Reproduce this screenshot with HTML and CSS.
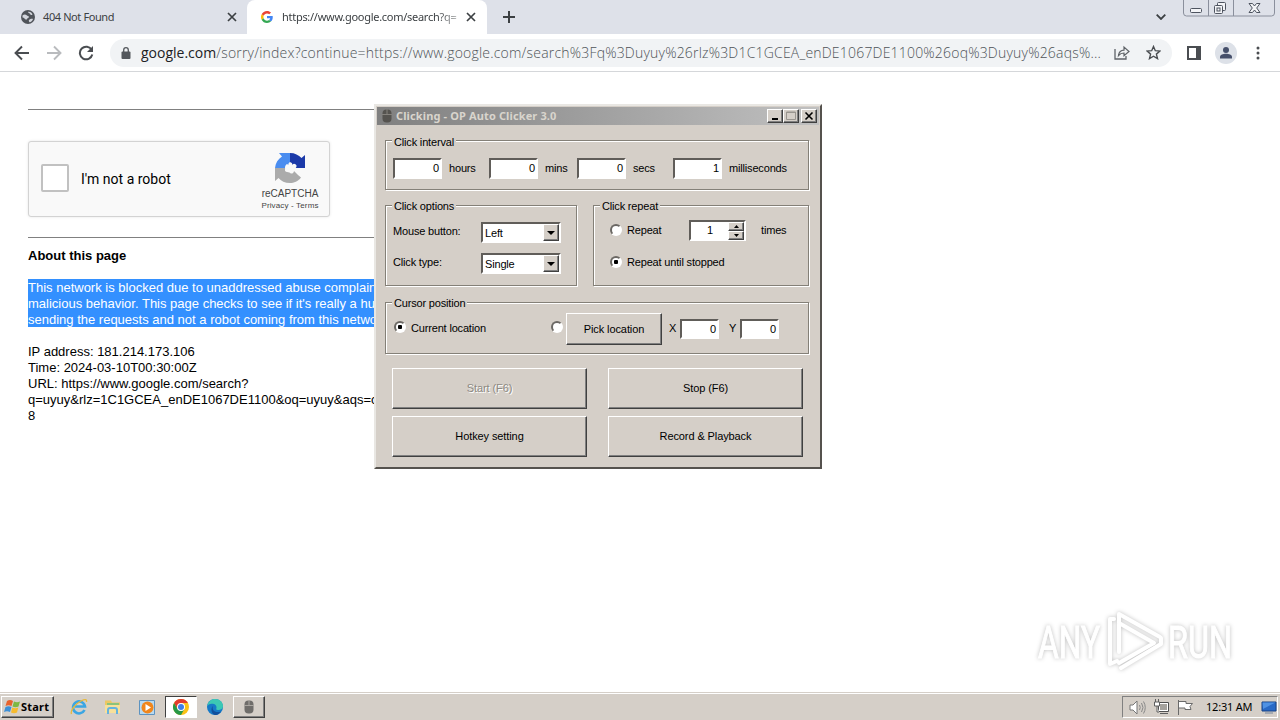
FILE: index.html
```html
<!DOCTYPE html>
<html lang="en">
  <head>
    <meta charset="utf-8">
    <title>Desktop</title>
    <link rel="stylesheet" href="styles.css">
  </head>

  <body>
    <div class="desktop">
      <header class="tabstrip">
        <div class="tab tab-idle">
          <svg width="14" height="14" viewBox="0 0 14 14"><circle cx="7" cy="7" r="7" fill="#50545a"/><path d="M1.500 5.500C3 4 5 4.500 6 5.500s2 .500 2 1.500-2 1-2 2-2 .500-2.500-.500-1.500-1-2-1zM7 1.800c2-.500 4 1 4.500 2.700-1 1-2 .500-2.500-.500S7 3 7 1.800zM8 10c1-1 3-1.500 4-1-.500 2-2 3-3.500 3.300C8 11.500 7.500 10.500 8 10z" fill="#d3d6dd"/></svg>
          <span class="tab-title">404 Not Found</span>
          <svg class="tab-close" width="10" height="10" viewBox="0 0 10 10"><path d="M1 1l8 8M9 1l-8 8" stroke="#3c4043" stroke-width="1.700"/></svg>
        </div>
        <div class="tab tab-active">
          <svg width="12" height="12" viewBox="0 0 48 48"><path fill="#ea4335" d="M24 9.500c3.500 0 6.700 1.200 9.200 3.600l6.900-6.900C35.900 2.400 30.500 0 24 0 14.600 0 6.500 5.400 2.600 13.200l8 6.200C12.400 13.700 17.700 9.500 24 9.500z"/><path fill="#4285f4" d="M47 24.500c0-1.600-.2-3.100-.4-4.500H24v9h12.900c-.6 3-2.300 5.500-4.800 7.200l7.700 6C44.400 38 47 31.800 47 24.500z"/><path fill="#fbbc05" d="M10.500 28.600c-.5-1.500-.8-3-.8-4.600s.3-3.100.8-4.600l-8-6.200C.9 16.500 0 20.100 0 24s.9 7.500 2.600 10.800z"/><path fill="#34a853" d="M24 48c6.500 0 11.900-2.100 15.900-5.800l-7.700-6c-2.200 1.500-4.900 2.300-8.200 2.300-6.300 0-11.600-4.200-13.500-9.900l-8 6.200C6.500 42.600 14.600 48 24 48z"/></svg>
          <span class="tab-title fade">https://www.google.com/search?q=</span>
          <svg class="tab-close" width="10" height="10" viewBox="0 0 10 10"><path d="M1 1l8 8M9 1l-8 8" stroke="#3c4043" stroke-width="1.700"/></svg>
        </div>
        <svg class="new-tab" width="12" height="12" viewBox="0 0 12 12"><path d="M6 0v12M0 6h12" stroke="#3c4043" stroke-width="2"/></svg>
        <svg class="tab-search" width="10" height="6" viewBox="0 0 10 6"><path d="M.700 .700L5 5 9.300 .700" fill="none" stroke="#3c4043" stroke-width="1.800"/></svg>
        <div class="caption">
          <svg width="92" height="17" viewBox="0 0 92 17"><path d="M.500 0v13a3 3 0 0 0 3 3h85a3 3 0 0 0 3-3V0M25.500 0v16M50.500 0v16" fill="none" stroke="#8a8f9c"/><g fill="#f3f4f7" stroke="#4e5460"><rect x="7.500" y="8.500" width="11" height="4" rx="1"/><rect x="34.500" y="2.500" width="8" height="8" rx="1"/><rect x="31.500" y="5.500" width="8" height="8" rx="1"/><rect x="34" y="8" width="3" height="3"/><path d="M66 3.500h3.500L71.500 6l2-2.500H77l-3.300 4.500 3.300 4.500h-3.500l-2-2.500-2 2.500H66L69.300 8z"/></g></svg>
        </div>
      </header>

      <nav class="toolbar">
        <svg class="nav-icon" width="16" height="16" viewBox="0 0 16 16"><path d="M15 8H2M8 1.500L1.500 8 8 14.500" fill="none" stroke="#4a4d51" stroke-width="1.900"/></svg>
        <svg class="nav-icon" width="16" height="16" viewBox="0 0 16 16"><path d="M1 8h13M8 1.500L14.500 8 8 14.500" fill="none" stroke="#b9bbbe" stroke-width="1.900"/></svg>
        <svg class="nav-icon" width="16" height="16" viewBox="0 0 16 16"><path d="M13.700 5A6.300 6.300 0 1 0 14.300 9.500" fill="none" stroke="#4a4d51" stroke-width="2"/><path d="M15 1v6H9z" fill="#4a4d51"/></svg>
        <div class="omnibox">
          <svg width="10" height="12" viewBox="0 0 10 12"><rect y="4.500" x=".500" width="9" height="7.500" rx="1" fill="#54585d"/><path d="M2.700 5V3a2.300 2.300 0 0 1 4.600 0v2" fill="none" stroke="#54585d" stroke-width="1.300"/></svg>
          <span class="url"><b>google.com</b>/sorry/index?continue=https://www.google.com/search%3Fq%3Duyuy%26rlz%3D1C1GCEA_enDE1067DE1100%26oq%3Duyuy%26aqs%...</span>
          <svg class="share" width="16" height="15" viewBox="0 0 16 15"><path d="M1 4v10h11v-3" fill="none" stroke="#5f6368" stroke-width="1.300"/><path d="M4.500 10.500C5 7 7 5.300 10 5.200V2l5 4.500-5 4.200V8C7.500 8 6 8.700 4.500 10.500z" fill="none" stroke="#5f6368" stroke-width="1.200"/></svg>
          <svg width="15" height="15" viewBox="0 0 15 15"><path d="M7.500 1.500l1.800 4.200 4.600.4-3.500 3 1.100 4.500-4-2.400-4 2.400 1.100-4.500-3.500-3 4.600-.4z" fill="none" stroke="#4a4d51" stroke-width="1.400"/></svg>
        </div>
        <svg class="side-panel" width="14" height="14" viewBox="0 0 14 14"><rect x="1" y="1" width="12" height="12" fill="none" stroke="#4a4d51" stroke-width="2"/><path d="M9 1h4v12H9z" fill="#4a4d51"/></svg>
        <svg class="avatar" width="22" height="22" viewBox="0 0 22 22"><circle cx="11" cy="11" r="11" fill="#dde1e8"/><circle cx="11" cy="8" r="3" fill="#46506b"/><path d="M5 16.500V15c0-2 3-3.200 6-3.200s6 1.200 6 3.200v1.500z" fill="#46506b"/></svg>
        <svg width="4" height="14" viewBox="0 0 4 14" fill="#4a4d51"><circle cx="2" cy="2" r="1.500"/><circle cx="2" cy="7" r="1.500"/><circle cx="2" cy="12" r="1.500"/></svg>
      </nav>

      <main class="page">
        <hr>
        <div class="captcha">
          <span class="captcha-box"></span>
          <span class="captcha-label">I'm not a robot</span>
          <div class="captcha-brand">
            <svg width="32" height="32" viewBox="0 0 32 32"><path d="M16 1H5l3 3.500C4 7 1.500 11 1 16h10c0-2 .500-3 2-4 1 1 2 1 3 0z" fill="#4a8df0"/><path d="M16 1c5 0 8.500 2 11.500 5L31 3v13H20l2-2c0-2-2-3-3.500-1.500L16 14z" fill="#1c3aa9"/><path d="M1 16h10c0 3 2 4.500 5 4.500 1.500 0 3-.500 4-1.500l4 4 3 2.500c-3 4-7 5.500-11 5.500-5 0-9-2-11.500-5L1 29z" fill="#ababab"/><path d="M16 16c-3-4-1-6.500 1-5.500s1 2 1 3c3-2 5-1 4.500 1s-2 2-3 2c1 3 0 5-2 5s-2-2-2.500-3c-2 2-4 1.500-4-.500s2.500-2 5-2z" fill="#f9f9f9"/></svg>
            <span class="brand-name">reCAPTCHA</span>
            <span class="brand-links">Privacy - Terms</span>
          </div>
        </div>
        <hr>
        <div class="about">
          <b>About this page</b>
          <p class="selected">This network is blocked due to unaddressed abuse complaints<br>malicious behavior. This page checks to see if it's really a human<br>sending the requests and not a robot coming from this network</p>
          <p>IP address: 181.214.173.106<br>Time: 2024-03-10T00:30:00Z<br>URL: https://www.google.com/search?<br>q=uyuy&amp;rlz=1C1GCEA_enDE1067DE1100&amp;oq=uyuy&amp;aqs=c<br>8</p>
        </div>
      </main>

      <footer class="taskbar">
        <div class="start">
          <svg width="17" height="16" viewBox="0 0 17 16"><path d="M3 2q3-2 6 0L7.500 7q-3-1.500-6 0z" fill="#e8622c"/><path d="M10 2.500q3 1.500 6 0L14.500 7.500q-3 1.500-6 0z" fill="#7db843"/><path d="M1.500 8q3-1.500 6 0L6 13q-3-1.500-6 0z" fill="#3c8fd6"/><path d="M8.300 8.500q3 1.500 6 0L13 13.500q-3 1.500-6 0z" fill="#f6bb2e"/></svg>
          <span>Start</span>
        </div>
        <div class="launcher">
          <svg width="18" height="18" viewBox="0 0 18 18"><path d="M14.500 12A6 6 0 1 1 15 8.500H5" fill="none" stroke="#3ba6e3" stroke-width="2.600"/><path d="M1.500 16C0 13 5 6 11 3c4-2 6-2 5.500 1" fill="none" stroke="#e7b93a" stroke-width="1.300"/></svg>
        </div>
        <div class="launcher">
          <svg width="18" height="16" viewBox="0 0 18 16"><path d="M1 1.500h6l1 2h8V14H1z" fill="#ecc863"/><path d="M3 4h12v5H3z" fill="#8cc37a"/><path d="M1 6h15v8H1z" fill="#f7e09a"/><path d="M4 15v-4q0-2 2-2h5q2 0 2 2v4" fill="none" stroke="#63b3e0" stroke-width="2"/></svg>
        </div>
        <div class="launcher">
          <svg width="17" height="17" viewBox="0 0 17 17"><path d="M.500 1.500h15v14H.500z" fill="#b9daf0" stroke="#5d93c0"/><circle cx="8.500" cy="8.500" r="6" fill="#f0861c"/><path d="M6.500 5l5.500 3.500L6.500 12z" fill="#fff"/></svg>
        </div>
        <div class="launcher pressed">
          <svg width="16" height="16" viewBox="0 0 16 16"><circle cx="8" cy="8" r="8" fill="#fbc116"/><path d="M1.070 4A8 8 0 0 1 14.930 4H8L4.540 10z" fill="#e33b2e"/><path d="M1.070 4A8 8 0 0 0 8 16l3.460-6H4.540z" fill="#279847"/><circle cx="8" cy="8" r="4" fill="#fff"/><circle cx="8" cy="8" r="3" fill="#3f7ee8"/></svg>
        </div>
        <div class="launcher">
          <svg width="16" height="16" viewBox="0 0 16 16"><circle cx="8" cy="8" r="8" fill="#1679c7"/><path d="M.300 7C1 2.500 4.500 0 8 0c5 0 8 3.500 8 7 0 3-2.500 4-5 4-2 0-2-1-1.500-2C10 6 7 4.500 4.500 4.800 2.500 5 1 6 .300 7z" fill="#3cc8b4"/><path d="M6 7c-1.500 4 2 7.500 8 5.500C12 15.500 9.500 16 8 16 4 15 3.500 9 6 7z" fill="#124f9c"/></svg>
        </div>
        <div class="launcher raised">
          <svg width="10" height="14" viewBox="0 0 10 14"><rect x=".500" y=".500" width="9" height="13" rx="4" fill="#6f6d6a"/><path d="M5 0v5M0 5.500h10" stroke="#aaa6a0"/></svg>
        </div>
        <div class="tray">
          <svg width="17" height="15" viewBox="0 0 17 15"><path d="M1 5h3l4-4v13L4 10H1z" fill="#fff" stroke="#777"/><path d="M10.500 5q1.500 2.500 0 5M12.500 3q3 4.500 0 9M14.500 1.500q3.500 6 0 12" fill="none" stroke="#888"/></svg>
          <svg width="17" height="16" viewBox="0 0 17 16"><path d="M5.500 3.500h10v9h-10z" fill="#fff" stroke="#4f4f4f"/><path d="M7 5h7v6H7z" fill="#a5a29d"/><path d="M7 14.500h8M2.500 0v3M5.500 0v3M1.500 3h5v4h-5zM4 7v6h2" fill="#fff" stroke="#5f5f5f"/></svg>
          <svg width="17" height="15" viewBox="0 0 17 15"><path d="M1.500 0v15M2 1.500h7v2h6.500l-2.500 3 1 3H8V8H2" fill="#fff" stroke="#6a6a6a"/></svg>
          <span class="clock">12:31 AM</span>
          <svg width="16" height="13" viewBox="0 0 16 13"><path d="M1 1h14v9H1z" fill="#2869c6" stroke="#174285"/><path d="M1.500 1.500h13L2 8z" fill="#4f92e4"/><path d="M4 12h8" stroke="#75869c"/></svg>
        </div>
      </footer>

      <section class="dialog">
        <div class="titlebar">
          <svg width="10" height="14" viewBox="0 0 10 14"><rect x=".500" y=".500" width="9" height="13" rx="4" fill="#55534f"/><path d="M5 0v5M0 5.500h10" stroke="#85827d"/></svg>
          <span class="title">Clicking - OP Auto Clicker 3.0</span>
          <span class="win-btn"><svg width="12" height="10" viewBox="0 0 12 10"><path d="M3 7h6v2H3z"/></svg></span>
          <span class="win-btn"><svg width="12" height="10" viewBox="0 0 12 10"><path d="M1.500 1v7.500h9V1zM1 1.500h10" fill="none" stroke="#99958f"/></svg></span>
          <span class="win-btn win-close"><svg width="12" height="10" viewBox="0 0 12 10"><path d="M2.500 1.500l7 7M9.500 1.500l-7 7" stroke="#000" stroke-width="1.600"/></svg></span>
        </div>
        <div class="dialog-body">
          <div class="group interval">
            <span class="legend">Click interval</span>
            <div class="interval-row">
              <span class="input">0</span><label>hours</label>
              <span class="input">0</span><label>mins</label>
              <span class="input">0</span><label>secs</label>
              <span class="input">1</span><label>milliseconds</label>
            </div>
          </div>

          <div class="group-row">
            <div class="group options">
              <span class="legend">Click options</span>
              <div class="options-grid">
                <label>Mouse button:</label>
                <span class="select">Left<i><svg width="8" height="4" viewBox="0 0 8 4"><path d="M0 0h8L4 4z"/></svg></i></span>
                <label>Click type:</label>
                <span class="select">Single<i><svg width="8" height="4" viewBox="0 0 8 4"><path d="M0 0h8L4 4z"/></svg></i></span>
              </div>
            </div>
            <div class="group repeat">
              <span class="legend">Click repeat</span>
              <div class="repeat-row">
                <span class="radio"></span>
                <label class="repeat-label">Repeat</label>
                <span class="spinner">1<span class="arrows"><i><svg width="5" height="3" viewBox="0 0 5 3"><path d="M0 3h5L2.500 0z"/></svg></i><i><svg width="5" height="3" viewBox="0 0 5 3"><path d="M0 0h5L2.500 3z"/></svg></i></span></span>
                <label class="times">times</label>
              </div>
              <div class="repeat-row">
                <span class="radio checked"></span>
                <label>Repeat until stopped</label>
              </div>
            </div>
          </div>

          <div class="group cursor">
            <span class="legend">Cursor position</span>
            <div class="cursor-row">
              <span class="radio checked"></span>
              <label class="current">Current location</label>
              <span class="radio"></span>
              <button class="pick">Pick location</button>
              <label class="axis">X</label><span class="input small">0</span>
              <label class="axis axis-y">Y</label><span class="input small">0</span>
            </div>
          </div>

          <div class="actions">
            <button disabled>Start (F6)</button>
            <button>Stop (F6)</button>
            <button>Hotkey setting</button>
            <button>Record &amp; Playback</button>
          </div>
        </div>
      </section>

      <svg class="watermark" width="200" height="64" viewBox="0 0 200 64">
        <g fill="#fff" stroke="#fff" font-family="Roboto, sans-serif" font-size="45">
          <text x="3" y="50" textLength="62" lengthAdjust="spacingAndGlyphs">ANY</text>
          <text x="133" y="50" textLength="64" lengthAdjust="spacingAndGlyphs">RUN</text>
        </g>
        <g fill="none" stroke="#fff" stroke-width="4" stroke-linejoin="round" stroke-linecap="round">
          <path d="M84 44V6l41 23M84 15l35 20-35 20"/>
          <path d="M79 11h-4v45l7-3M86 60l40-24v-6"/>
        </g>
      </svg>
    </div>
  </body>
</html>
```
FILE: styles.css
```css
* {
  box-sizing: border-box;
}

body {
  margin: 0;
  background: #fff;
  color: #000;
  font-family: "Liberation Sans", Arial, sans-serif;
}

svg {
  display: block;
  flex: none;
}

.desktop {
  position: relative;
  display: flex;
  flex-direction: column;
  width: 1280px;
  height: 720px;
  overflow: hidden;
}

/* browser */
.tabstrip {
  display: flex;
  height: 34px;
  background: #dee1e9;
}

.tab {
  display: flex;
  align-items: center;
  height: 34px;
  font: 11px "Noto Sans", sans-serif;
  letter-spacing: -0.4px;
  color: #3c4043;
}

.tab-idle {
  width: 247px;
  padding: 0 10px 0 21px;
}

.tab-active {
  width: 240px;
  padding: 0 11px 0 14px;
  background: #fff;
  border-radius: 8px 8px 0 0;
}

.tab-title {
  flex: 1;
  margin: 0 0 2px 8px;
  white-space: nowrap;
}

.fade {
  margin: 0 8px 2px 9px;
  letter-spacing: -0.28px;
  -webkit-mask-image: linear-gradient(90deg, #000 88%, rgba(0, 0, 0, 0.3));
  mask-image: linear-gradient(90deg, #000 88%, rgba(0, 0, 0, 0.3));
}

.new-tab {
  margin: 11px 0 0 16px;
}

.tab-search {
  margin: 14px 17px 0 auto;
}

.caption {
  margin-right: 5px;
}

.toolbar {
  display: flex;
  align-items: center;
  height: 38px;
  padding-left: 14px;
  border-bottom: 1px solid #d5d7da;
}

.nav-icon {
  margin-right: 16px;
}

.omnibox {
  display: flex;
  align-items: center;
  width: 1062px;
  height: 28px;
  padding: 0 10px 0 11px;
  border-radius: 14px;
  background: #f1f3f5;
}

.url {
  width: 973px;
  margin-left: 10px;
  white-space: nowrap;
  font: 300 14px "Open Sans", sans-serif;
  letter-spacing: 0.2px;
  color: #4f5358;
}

.url b {
  font-weight: 400;
  letter-spacing: 0;
  color: #202124;
}

.share {
  margin-right: 16px;
}

.side-panel {
  margin-left: 15px;
}

.avatar {
  margin: 0 19px 0 14px;
}

.page {
  flex: 1;
  padding: 37px 28px 0;
}

.page hr {
  width: 600px;
  height: 1px;
  margin: 0;
  border: 0;
  background: #808080;
}

.captcha {
  display: flex;
  align-items: center;
  width: 302px;
  height: 76px;
  margin: 31px 0 20px;
  padding-left: 12px;
  border: 1px solid #d3d3d3;
  border-radius: 3px;
  background: #f9f9f9;
  box-shadow: 0 0 3px rgba(0, 0, 0, 0.1);
}

.captcha-box {
  width: 28px;
  height: 28px;
  margin-bottom: 2px;
  border: 2px solid #c1c1c1;
  border-radius: 2px;
  background: #fff;
}

.captcha-label {
  width: 180px;
  margin-left: 12px;
  font: 14px Roboto, sans-serif;
}

.captcha-brand {
  display: flex;
  flex-direction: column;
  align-items: center;
  width: 58px;
  padding-top: 6px;
  font-size: 10px;
  line-height: 12px;
  color: #444;
}

.brand-name {
  margin-top: 4px;
  white-space: nowrap;
}

.brand-links {
  font-size: 8px;
  letter-spacing: 0.15px;
  white-space: nowrap;
}

.about {
  width: 346px;
  margin-top: 10px;
  white-space: nowrap;
  font-size: 13px;
  line-height: 16px;
}

.about p {
  margin: 16px 0;
}

.about .selected {
  width: 404px;
  margin-top: 15px;
  padding-top: 1px;
  background: linear-gradient(#3390ff, #3390ff) 0 0 / 100% 48px no-repeat;
  color: #fff;
}

/* taskbar */
.taskbar {
  display: flex;
  align-items: center;
  height: 28px;
  padding: 1px 2px 0 1px;
  border-top: 1px solid #d5cfc8;
  box-shadow: inset 0 1px #fff;
  background: #d5cfc8;
}

.start,
.raised,
.dialog button,
.win-btn,
.select i,
.arrows i {
  border: 1px solid;
  border-color: #fff #404040 #404040 #fff;
  background: #d5cfc8;
  box-shadow: inset -1px -1px #808080;
}

.start {
  display: flex;
  align-items: center;
  width: 53px;
  height: 22px;
  margin-right: 9px;
  padding: 0 0 1px 2px;
  font: bold 11px "Noto Sans", sans-serif;
  letter-spacing: 0.2px;
}

.launcher {
  display: flex;
  align-items: center;
  justify-content: center;
  width: 32px;
  height: 22px;
  margin-right: 2px;
}

.pressed {
  border: 1px solid;
  border-color: #404040 #fff #fff #404040;
  background: #fff;
}

.tray {
  display: flex;
  align-items: center;
  gap: 7px;
  width: 156px;
  height: 22px;
  margin-left: auto;
  padding-left: 6px;
  border: 1px solid;
  border-color: #808080 #fff #fff #808080;
}

.clock {
  width: 49px;
  margin: 0 -1px 2px 5px;
  white-space: nowrap;
  font: 11px "Noto Sans", sans-serif;
  letter-spacing: -0.2px;
}

/* auto clicker window */
.dialog {
  position: absolute;
  left: 374px;
  top: 104px;
  width: 448px;
  height: 365px;
  padding: 1px;
  border: 2px solid;
  border-color: #e9e7e3 #55524e #55524e #e9e7e3;
  background: #d5cfc8;
  font-size: 11px;
  letter-spacing: -0.17px;
}

.titlebar {
  display: flex;
  align-items: center;
  height: 18px;
  padding: 0 2px 0 5px;
  background: linear-gradient(90deg, #808080, #c0c0c0);
}

.title {
  flex: 1;
  margin: 0 0 2px 4px;
  font: bold 11px "Noto Sans", sans-serif;
  letter-spacing: 0.13px;
  color: #d9d5cd;
}

.win-btn {
  display: flex;
  align-items: center;
  justify-content: center;
  width: 16px;
  height: 14px;
}

.win-close {
  margin-left: 2px;
}

.dialog-body {
  padding: 15px 10px 0 8px;
}

.group {
  border: 1px solid #848078;
  box-shadow: 1px 1px #fff, inset 1px 1px #fff;
}

.legend {
  display: block;
  width: fit-content;
  height: 13px;
  margin: -7px 0 0 6px;
  padding: 0 2px;
  line-height: 14px;
  background: #d5cfc8;
}

.interval .legend {
  line-height: 16px;
}

.dialog label {
  padding-bottom: 2px;
  white-space: nowrap;
}

.input {
  height: 21px;
  padding-right: 1px;
  border: 2px solid;
  border-color: #605d59 #fff #fff #605d59;
  background: #fff;
  text-align: right;
  line-height: 17px;
}

.interval {
  height: 50px;
}

.interval-row {
  display: grid;
  grid-template-columns: 49px 47px 49px 39px 49px 47px 49px auto;
  align-items: center;
  margin: 11px 0 0 7px;
}

.interval-row label {
  padding-left: 7px;
}

.group-row {
  display: flex;
  gap: 16px;
  margin: 15px 0 16px;
}

.options {
  width: 192px;
  height: 81px;
}

.options-grid {
  display: grid;
  grid-template-columns: 88px 80px;
  grid-auto-rows: 21px;
  row-gap: 10px;
  line-height: 19px;
  margin: 10px 0 0 7px;
}

.select {
  display: flex;
  justify-content: space-between;
  padding-left: 2px;
  border: 2px solid;
  border-color: #605d59 #fff #fff #605d59;
  background: #fff;
}

.select i {
  display: flex;
  align-items: center;
  justify-content: center;
  width: 16px;
  height: 17px;
}

.repeat {
  width: 216px;
  height: 81px;
}

.repeat-row {
  display: flex;
  align-items: center;
  height: 21px;
  margin: 8px 0 11px 16px;
}

.radio {
  width: 12px;
  height: 12px;
  margin: 0 5px 2px 0;
  border: 2px solid;
  border-color: #6b6864 #fff #fff #6b6864;
  border-radius: 50%;
  background: #fff;
}

.checked {
  background: radial-gradient(#000 2px, #fff 2.500px);
}

.repeat-label {
  width: 62px;
}

.spinner {
  display: flex;
  justify-content: flex-end;
  width: 57px;
  height: 21px;
  border: 2px solid;
  border-color: #605d59 #fff #fff #605d59;
  background: #fff;
  line-height: 17px;
}

.arrows {
  width: 16px;
  margin-left: 15px;
}

.arrows i {
  display: flex;
  align-items: center;
  justify-content: center;
  height: 9px;
}

.times {
  margin-left: 15px;
}

.cursor {
  height: 52px;
}

.cursor-row {
  display: flex;
  align-items: center;
  height: 32px;
  margin: 4px 0 0 8px;
}

.current {
  width: 140px;
}

.cursor-row label {
  padding-bottom: 3px;
}

.cursor-row .radio {
  flex: none;
  margin-bottom: 4px;
}

.dialog button {
  padding: 0 0 2px;
  font: 11px "Liberation Sans", Arial, sans-serif;
  letter-spacing: -0.1px;
  color: #000;
}

.dialog button:disabled {
  color: #8d8982;
  text-shadow: 1px 1px #fff;
}

.dialog .pick {
  width: 96px;
  height: 32px;
  margin-left: -2px;
  padding: 0;
}

.axis {
  width: 11px;
  margin-left: 7px;
}

.axis-y {
  margin-left: 10px;
}

.small {
  width: 39px;
  height: 20px;
  margin-bottom: 1px;
}

.actions {
  display: grid;
  grid-template-columns: 195px 195px;
  grid-auto-rows: 41px;
  gap: 7px 21px;
  margin: 14px 0 0 7px;
}

.watermark {
  position: absolute;
  left: 1035px;
  top: 608px;
  filter: drop-shadow(0 0 2px rgba(0, 0, 0, 0.25));
}
```
